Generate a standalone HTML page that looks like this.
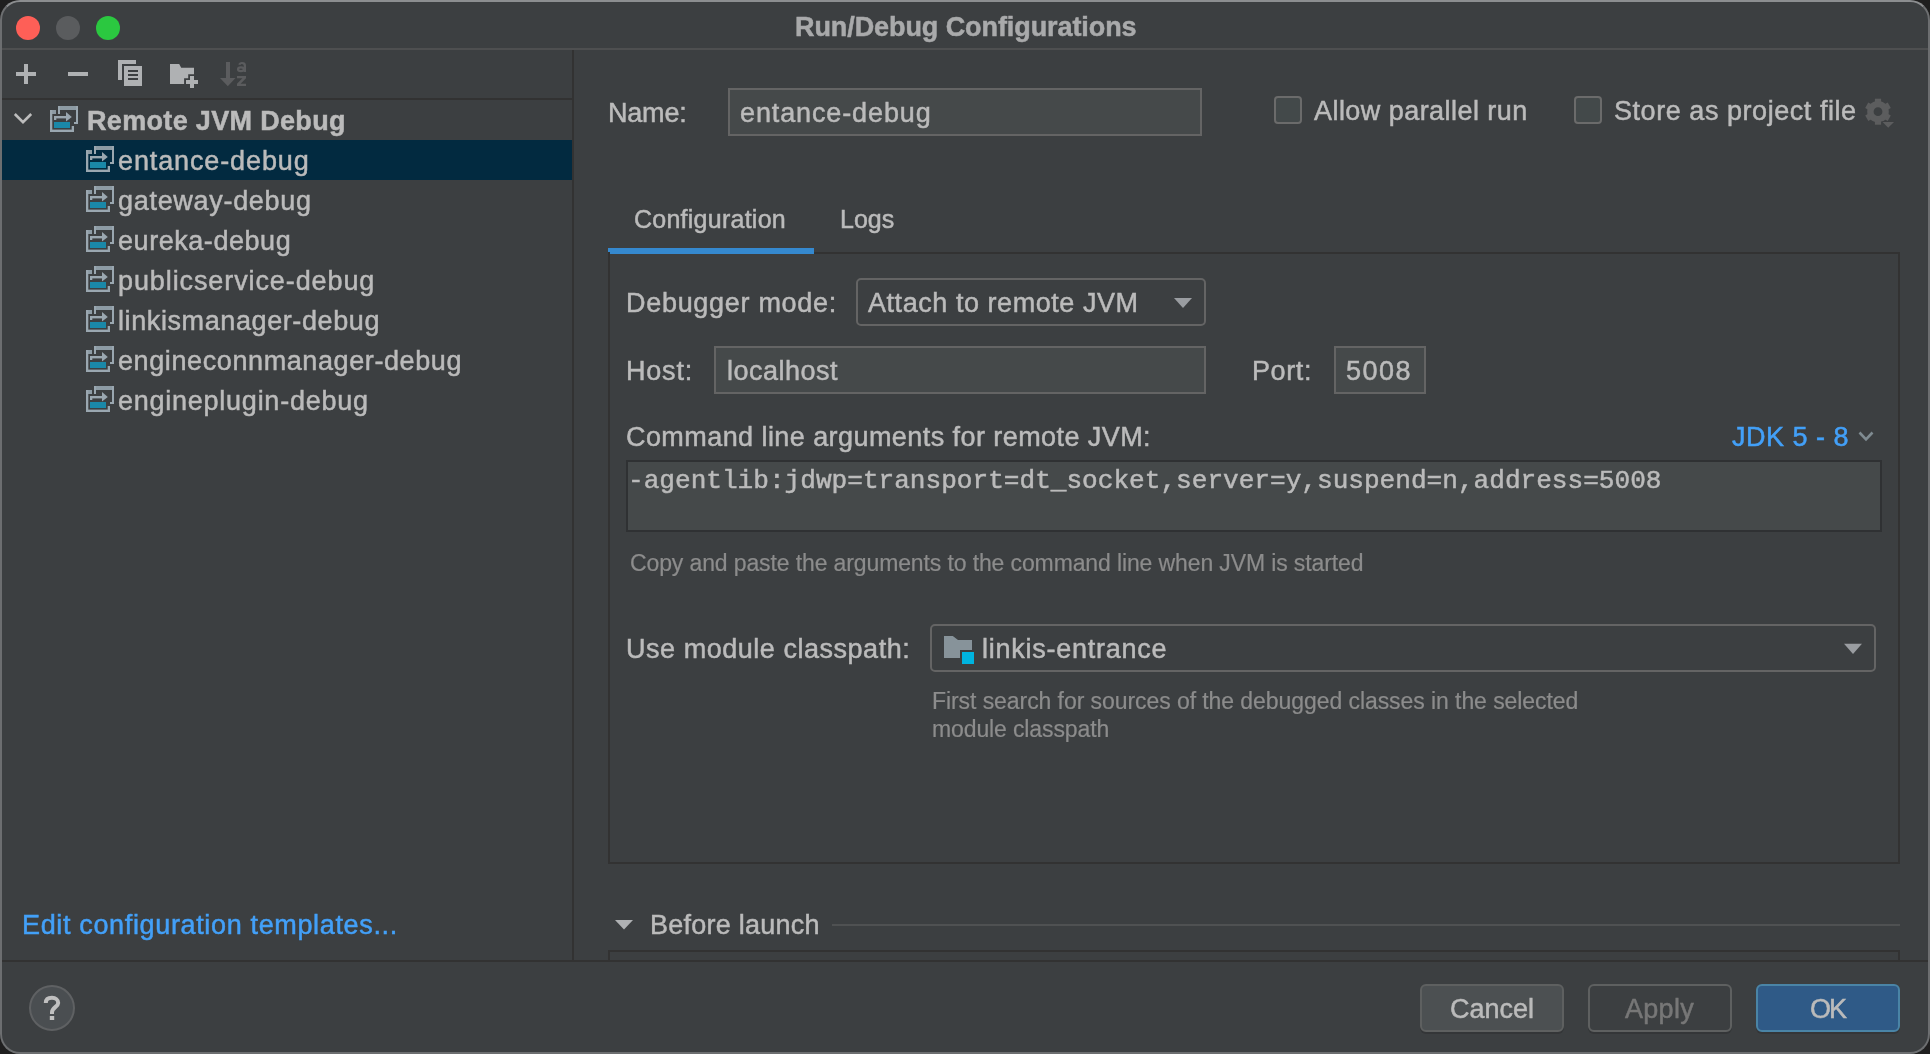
<!DOCTYPE html>
<html><head><meta charset="utf-8">
<style>
html,body{margin:0;padding:0;width:1930px;height:1054px;overflow:hidden;background:#1f1f1f;}
body{font-family:"Liberation Sans",sans-serif;color:#bbbbbb;}
#win{position:absolute;left:0;top:0;width:1926px;height:1050px;border:2px solid #6c6e70;border-top-color:#8c8e90;border-radius:20px;background:#3c3f41;}
.a{position:absolute;}
.t{position:absolute;white-space:nowrap;will-change:transform;-webkit-text-stroke:0.5px currentColor;font-size:27px;line-height:30px;}
.b{font-weight:bold;}
.link{color:#43a0f8;}
.hint{color:#8c8c8c;font-size:23px;-webkit-text-stroke:0.2px currentColor !important;}
.mono{font-family:"Liberation Mono",monospace;font-size:26.1px;}
.dot{position:absolute;width:24px;height:24px;border-radius:50%;}
.field{position:absolute;box-sizing:border-box;background:#45494a;border:2px solid #646464;}
.combo{position:absolute;box-sizing:border-box;border:2px solid #646464;border-radius:5px;}
.cb{position:absolute;box-sizing:border-box;width:28px;height:28px;border:2px solid #6b6b6b;border-radius:4px;background:#43494a;}
.btn{position:absolute;box-sizing:border-box;height:48px;border:2px solid #5e6060;border-radius:6px;box-shadow:0 2px 0 #343638;}
svg{position:absolute;left:0;top:0;}
</style></head><body>
<div id="win"></div>
<div class="a" style="left:0;top:0;width:1930px;height:1054px;">
  <div class="dot" style="left:16px;top:16px;background:#fe5f57"></div>
  <div class="dot" style="left:56px;top:16px;background:#5a5c5e"></div>
  <div class="dot" style="left:96px;top:16px;background:#2bc840"></div>
  <div class="t b" style="left:795px;top:12px;color:#a9aaab;letter-spacing:-0.08px">Run/Debug Configurations</div>
  <div class="a" style="left:2px;top:48px;width:1926px;height:2px;background:#4e4f50"></div>

  <div class="a" style="left:2px;top:98px;width:571px;height:2px;background:#323232"></div>
  <div class="a" style="left:572px;top:50px;width:2px;height:911px;background:#323232"></div>
  <div class="a" style="left:2px;top:960px;width:1926px;height:2px;background:#323232"></div>

  <div class="a" style="left:2px;top:140px;width:570px;height:40px;background:#022a40"></div>
  <div class="t b" style="left:87px;top:106px;letter-spacing:0.33px">Remote JVM Debug</div>
  <div class="t" style="left:118px;top:146px;letter-spacing:0.88px">entance-debug</div>
  <div class="t" style="left:118px;top:186px;letter-spacing:0.7px">gateway-debug</div>
  <div class="t" style="left:118px;top:226px;letter-spacing:0.55px">eureka-debug</div>
  <div class="t" style="left:118px;top:266px;letter-spacing:0.9px">publicservice-debug</div>
  <div class="t" style="left:118px;top:306px;letter-spacing:0.6px">linkismanager-debug</div>
  <div class="t" style="left:118px;top:346px;letter-spacing:0.6px">engineconnmanager-debug</div>
  <div class="t" style="left:118px;top:386px;letter-spacing:0.75px">engineplugin-debug</div>

  <div class="t link" style="left:22px;top:910px;letter-spacing:0.65px">Edit configuration templates...</div>

  <div class="t" style="left:608px;top:98px;letter-spacing:-0.2px">Name:</div>
  <div class="field" style="left:728px;top:88px;width:474px;height:48px"></div>
  <div class="t" style="left:740px;top:98px;letter-spacing:0.88px">entance-debug</div>
  <div class="cb" style="left:1274px;top:96px"></div>
  <div class="t" style="left:1314px;top:96px;letter-spacing:0.45px">Allow parallel run</div>
  <div class="cb" style="left:1574px;top:96px"></div>
  <div class="t" style="left:1614px;top:96px;letter-spacing:0.55px">Store as project file</div>

  <div class="t" style="left:634px;top:204px;font-size:25px;letter-spacing:0.25px">Configuration</div>
  <div class="t" style="left:840px;top:204px;font-size:25px">Logs</div>
  <div class="a" style="left:608px;top:248px;width:206px;height:6px;background:#3589cf"></div>
  <div class="a" style="left:608px;top:252px;width:1292px;height:612px;box-sizing:border-box;border:2px solid #323232;border-top:none"></div>
  <div class="a" style="left:814px;top:252px;width:1086px;height:2px;background:#323232"></div>

  <div class="t" style="left:626px;top:288px;letter-spacing:0.7px">Debugger mode:</div>
  <div class="combo" style="left:856px;top:278px;width:350px;height:48px"></div>
  <div class="t" style="left:868px;top:288px;letter-spacing:0.55px">Attach to remote JVM</div>
  <div class="t" style="left:626px;top:356px;letter-spacing:0.8px">Host:</div>
  <div class="field" style="left:714px;top:346px;width:492px;height:48px"></div>
  <div class="t" style="left:727px;top:356px;letter-spacing:0.5px">localhost</div>
  <div class="t" style="left:1252px;top:356px;letter-spacing:0.6px">Port:</div>
  <div class="field" style="left:1334px;top:346px;width:92px;height:48px"></div>
  <div class="t" style="left:1346px;top:356px;letter-spacing:1.5px">5008</div>

  <div class="t" style="left:626px;top:422px;letter-spacing:0.43px">Command line arguments for remote JVM:</div>
  <div class="t link" style="left:1732px;top:422px;letter-spacing:0.5px">JDK 5 - 8</div>
  <div class="field" style="left:626px;top:460px;width:1256px;height:72px;border-color:#2f3133"></div>
  <div class="t mono" style="left:628px;top:466px">-agentlib:jdwp=transport=dt_socket,server=y,suspend=n,address=5008</div>
  <div class="t hint" style="left:630px;top:548px;letter-spacing:-0.12px">Copy and paste the arguments to the command line when JVM is started</div>

  <div class="t" style="left:626px;top:634px;letter-spacing:0.53px">Use module classpath:</div>
  <div class="combo" style="left:930px;top:624px;width:946px;height:48px"></div>
  <div class="t" style="left:982px;top:634px;letter-spacing:0.75px">linkis-entrance</div>
  <div class="t hint" style="left:932px;top:686px;letter-spacing:-0.07px">First search for sources of the debugged classes in the selected</div>
  <div class="t hint" style="left:932px;top:714px;letter-spacing:-0.12px">module classpath</div>

  <div class="t" style="left:650px;top:910px;letter-spacing:0.25px">Before launch</div>
  <div class="a" style="left:832px;top:924px;width:1068px;height:2px;background:#4f5152"></div>
  <div class="a" style="left:608px;top:950px;width:1292px;height:12px;box-sizing:border-box;border:2px solid #323232;border-bottom:none"></div>

  <div class="btn" style="left:1420px;top:984px;width:144px;background:#4c5052"></div>
  <div class="t" style="left:1450px;top:994px">Cancel</div>
  <div class="btn" style="left:1588px;top:984px;width:144px;"></div>
  <div class="t" style="left:1625px;top:994px;color:#777777;letter-spacing:0.3px">Apply</div>
  <div class="btn" style="left:1756px;top:984px;width:144px;background:#2f5a87;border-color:#4a84a6"></div>
  <div class="t" style="left:1810px;top:994px;letter-spacing:-2px">OK</div>
  <div class="a" style="left:29px;top:985px;width:46px;height:46px;box-sizing:border-box;border-radius:50%;border:2px solid #5f6163;background:#4a4e51"></div>

  <svg width="1930" height="1054" viewBox="0 0 1930 1054">
    <defs>
      <g id="ri">
        <!-- back window -->
        <rect x="8" y="0" width="20" height="4" fill="#8d9ba4"/>
        <rect x="8" y="0" width="2" height="8" fill="#9aa7b0"/>
        <rect x="26" y="0" width="2" height="18" fill="#9aa7b0"/>
        <rect x="24" y="16" width="4" height="2" fill="#9aa7b0"/>
        <!-- front window -->
        <rect x="0" y="4" width="6" height="4" fill="#8d9ba4"/>
        <rect x="0" y="4" width="2.3" height="22" fill="#9aa7b0"/>
        <rect x="0" y="23.6" width="24" height="2.4" fill="#9aa7b0"/>
        <rect x="21.7" y="20" width="2.3" height="6" fill="#9aa7b0"/>
        <!-- arrow -->
        <rect x="4" y="10" width="12.5" height="2.4" fill="#9aa7b0"/>
        <rect x="4" y="10" width="2.3" height="4" fill="#9aa7b0"/>
        <path d="M16 6 L21.8 11 L16 15.6 Z" fill="#9aa7b0"/>
        <!-- blue -->
        <rect x="4" y="16" width="16" height="6" fill="#1a88a8"/>
      </g>
    </defs>
    <!-- toolbar -->
    <g fill="#afb1b3">
      <rect x="16" y="72" width="20" height="4"/><rect x="24" y="64" width="4" height="20"/>
      <rect x="68" y="72" width="20" height="4"/>
      <rect x="118" y="60" width="18" height="4"/><rect x="118" y="60" width="4" height="20"/>
      <rect x="124" y="66" width="18" height="20"/>
      <path d="M170 64 H179.2 L181.2 67.7 H194 V74.2 H188.2 V78.3 H184.1 V84 H170 Z"/>
      <rect x="186" y="80" width="12" height="4"/><rect x="190" y="76" width="4" height="12"/>
    </g>
    <g fill="#3c3f41">
      <rect x="128" y="70" width="10" height="2"/><rect x="128" y="74" width="10" height="2"/><rect x="128" y="78" width="10" height="2"/>
    </g>
    <g fill="#5b5c5e">
      <rect x="226" y="62" width="4" height="17"/>
      <path d="M220 78 H235.5 L227.8 86.2 Z"/>
      <path d="M238.3 64.6 Q238.9 62 242 62 Q246 62 246 65.4 V72 H243.7 V65.6 Q243.7 64.1 241.9 64.1 Q240.7 64.1 240.4 65.1 Z"/><ellipse cx="240.9" cy="69.3" rx="2.9" ry="1.9" fill="none" stroke="#5b5c5e" stroke-width="2.2"/>
      <path d="M237 76 H246 V78.3 L240.6 83.7 H246 V86 H237 V83.7 L242.4 78.3 H237 Z"/>
    </g>
    <!-- tree chevron -->
    <polyline points="14.8,114 23,122.2 31.2,114" fill="none" stroke="#bdbdbd" stroke-width="2.6"/>
    <use href="#ri" x="50" y="106"/>
    <use href="#ri" x="86" y="146"/>
    <use href="#ri" x="86" y="186"/>
    <use href="#ri" x="86" y="226"/>
    <use href="#ri" x="86" y="266"/>
    <use href="#ri" x="86" y="306"/>
    <use href="#ri" x="86" y="346"/>
    <use href="#ri" x="86" y="386"/>
    <!-- gear -->
    <g transform="translate(1878,111.7)" fill="#5c5d5e">
      <path d="M-3.1 -13 H3.1 V-9 H-3.1 Z" />
      <path d="M-3.1 -13 H3.1 V-9 H-3.1 Z" transform="rotate(60)"/>
      <path d="M-3.1 -13 H3.1 V-9 H-3.1 Z" transform="rotate(120)"/>
      <path d="M-3.1 -13 H3.1 V-9 H-3.1 Z" transform="rotate(180)"/>
      <path d="M-3.1 -13 H3.1 V-9 H-3.1 Z" transform="rotate(240)"/>
      <path d="M-3.1 -13 H3.1 V-9 H-3.1 Z" transform="rotate(300)"/>
      <circle r="7.6" fill="none" stroke="#5c5d5e" stroke-width="6.4"/>
    </g>
    <path d="M1882.5 122 H1894 L1888.2 127.8 Z" fill="#5c5d5e" stroke="#3c3f41" stroke-width="1.2" paint-order="stroke"/>
    <!-- combo arrows -->
    <path d="M1174 298 H1192 L1183 308 Z" fill="#9a9da1"/>
    <path d="M1844 643.7 H1862 L1853 654 Z" fill="#9a9da1"/>
    <!-- JDK chevron -->
    <polyline points="1859.5,432.5 1866,439.3 1872.5,432.5" fill="none" stroke="#7f8b91" stroke-width="2.6"/>
    <!-- module icon -->
    <path d="M944 636 H952.8 L958 640 H972 V650 H960 V658 H944 Z" fill="#87939a"/>
    <rect x="962" y="652" width="12" height="12" fill="#00b4e0"/>
    <!-- before launch triangle -->
    <path d="M615 920 H633 L624 929.6 Z" fill="#afb1b3"/>
    <!-- help ? -->
    <path d="M45.8 1003 C45.8 998.5 48.5 997.8 52 997.8 C55.5 997.8 58.2 999.8 58.2 1003 C58.2 1006.5 52 1007.5 52 1012.5 V1014" fill="none" stroke="#c0c0c0" stroke-width="4"/>
    <rect x="49.8" y="1016" width="4.4" height="4" fill="#c0c0c0"/>
  </svg>
</div>
</body></html>
